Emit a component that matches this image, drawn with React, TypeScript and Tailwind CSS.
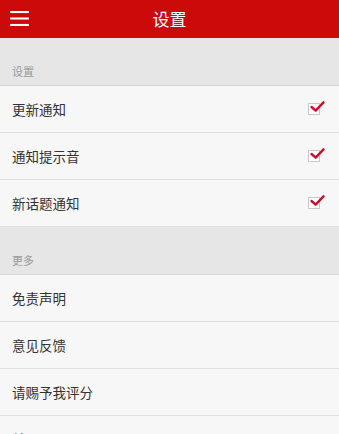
import React, { useState } from 'react';

const font = { fontFamily: '"Noto Sans CJK SC", "Noto Sans", sans-serif' };

const Section: React.FC<{ label: string }> = ({ label }) => (
  <div className="h-[48px] bg-[#e6e6e6] border-b border-[#d6d6d6] flex items-end px-3 pb-[8px]">
    <span className="text-[11px] text-[#9a9a9a] leading-none">{label}</span>
  </div>
);

const Check: React.FC<{ on: boolean }> = ({ on }) => (
  <div className="w-[12px] h-[12px] border border-[#c8c8c8] bg-white relative">
    {on && (
      <svg viewBox="0 0 16 13" className="absolute left-[1px] -top-[3px] w-[15px] h-[12px] overflow-visible">
        <path d="M1.5 6.5 L6 10.5 L14.5 1.5" fill="none" stroke="#c8102e" strokeWidth="2.6" strokeLinecap="round" strokeLinejoin="round" />
      </svg>
    )}
  </div>
);

const Row: React.FC<{ label: string; checked?: boolean; onToggle?: () => void }> = ({ label, checked, onToggle }) => (
  <div
    className="h-[47px] bg-[#f7f7f7] border-b border-[#e0e0e0] flex items-center justify-between pl-3 pr-[19px]"
    onClick={onToggle}
  >
    <span className="text-[13.5px] text-[#333]">{label}</span>
    {checked !== undefined && <Check on={checked} />}
  </div>
);

const App: React.FC = () => {
  const [opts, setOpts] = useState([true, true, true]);
  const toggle = (i: number) => setOpts((o) => o.map((v, j) => (j === i ? !v : v)));

  return (
    <div className="w-[339px] h-[434px] overflow-hidden bg-[#f7f7f7]" style={font}>
      <div className="h-[38px] bg-[#cc0a0a] flex items-center relative">
        <svg viewBox="0 0 20 16" className="absolute left-[10px] top-[11px] w-[19px] h-[15px]">
          <rect x="0" y="0" width="20" height="2.2" fill="#fff" />
          <rect x="0" y="6.9" width="20" height="2.2" fill="#fff" />
          <rect x="0" y="13.8" width="20" height="2.2" fill="#fff" />
        </svg>
        <div className="flex-1 text-center text-white text-[17px]">设置</div>
      </div>

      <Section label="设置" />
      <Row label="更新通知" checked={opts[0]} onToggle={() => toggle(0)} />
      <Row label="通知提示音" checked={opts[1]} onToggle={() => toggle(1)} />
      <Row label="新话题通知" checked={opts[2]} onToggle={() => toggle(2)} />

      <Section label="更多" />
      <Row label="免责声明" />
      <Row label="意见反馈" />
      <Row label="请赐予我评分" />
      <Row label="关于" />
    </div>
  );
};

export default App;
